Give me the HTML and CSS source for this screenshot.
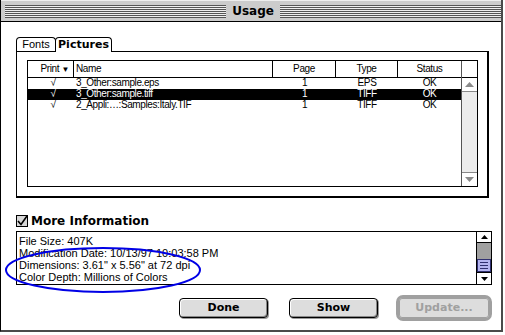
FILE: index.html
```html
<!DOCTYPE html>
<html>
<head>
<meta charset="utf-8">
<link rel="stylesheet" href="styles.css">
</head>
<body>
<div class="window">
  <div class="titlebar">
    <span class="stripes"></span>
    <span class="title">Usage</span>
    <span class="stripes"></span>
  </div>
  <div class="content">
    <div class="tabs">
      <div class="tab">Fonts</div>
      <div class="tab active">Pictures</div>
    </div>
    <div class="panel">
      <div class="list">
        <div class="list-main">
          <div class="row head">
            <div class="c c-print">Print <span class="tri">▼</span></div>
            <div class="c c-name">Name</div>
            <div class="c c-mid">Page</div>
            <div class="c c-mid">Type</div>
            <div class="c c-mid last">Status</div>
          </div>
          <div class="row">
            <div class="c c-chk">√</div>
            <div class="c c-name">3_Other:sample.eps</div>
            <div class="c c-mid">1</div>
            <div class="c c-mid">EPS</div>
            <div class="c c-mid">OK</div>
          </div>
          <div class="row sel">
            <div class="c c-chk">√</div>
            <div class="c c-name">3_Other:sample.tiff</div>
            <div class="c c-mid">1</div>
            <div class="c c-mid">TIFF</div>
            <div class="c c-mid">OK</div>
          </div>
          <div class="row">
            <div class="c c-chk">√</div>
            <div class="c c-name">2_Appli:…:Samples:Italy.TIF</div>
            <div class="c c-mid">1</div>
            <div class="c c-mid">TIFF</div>
            <div class="c c-mid">OK</div>
          </div>
        </div>
        <div class="vscroll">
          <div class="vs-head"></div>
          <div class="vs-up"><svg width="9" height="5" viewBox="0 0 9 5"><path d="M0 5 L4.5 0 L9 5 Z" fill="#8a8a8a"/></svg></div>
          <div class="vs-track"></div>
          <div class="vs-down"><svg width="9" height="5" viewBox="0 0 9 5"><path d="M0 0 L4.5 5 L9 0 Z" fill="#8a8a8a"/></svg></div>
        </div>
      </div>
    </div>
    <div class="more">
      <svg class="checkbox" width="12" height="12" viewBox="0 0 12 12">
        <rect x="0.5" y="0.5" width="11" height="11" fill="#d8d8d8" stroke="#000"/>
        <path d="M2 6 L5 9.5 L11 1" fill="none" stroke="#000" stroke-width="1.6"/>
      </svg>
      <span>More Information</span>
    </div>
    <div class="info">
      <div class="info-text">
        <div>File Size: 407K</div>
        <div>Modification Date: 10/13/97 10:03:58 PM</div>
        <div>Dimensions: 3.61" x 5.56" at 72 dpi</div>
        <div>Color Depth: Millions of Colors</div>
      </div>
      <div class="iscroll">
        <div class="is-up"><svg width="7" height="4" viewBox="0 0 7 4"><path d="M0 4 L3.5 0 L7 4 Z" fill="#000"/></svg></div>
        <div class="is-track"></div>
        <div class="is-thumb"><span></span><span></span><span></span></div>
        <div class="is-down"><svg width="7" height="4" viewBox="0 0 7 4"><path d="M0 0 L3.5 4 L7 0 Z" fill="#000"/></svg></div>
      </div>
    </div>
    <div class="buttons">
      <div class="btn done">Done</div>
      <div class="btn show">Show</div>
      <div class="ring"><div class="btn disabled">Update...</div></div>
    </div>
  </div>
  <svg class="annot" width="505" height="335" viewBox="0 0 505 335">
    <ellipse cx="103" cy="270" rx="97" ry="22" fill="none" stroke="#0000e6" stroke-width="2"/>
  </svg>
</div>
</body>
</html>
```
FILE: styles.css
```css
* { box-sizing: border-box; }
body {
  margin: 0;
  background: #fff;
  font-family: "Liberation Sans", Arial, sans-serif;
  color: #000;
}
.window {
  position: relative;
  width: 503px;
  height: 332px;
  border-left: 1px solid #000;
  border-right: 2px solid #4a4a4a;
  border-bottom: 2px solid #4a4a4a;
  background: #fff;
  display: flex;
  flex-direction: column;
}
.titlebar {
  height: 22px;
  flex: none;
  background: #cccccc;
  border-top: 1px solid #eee;
  border-bottom: 1px solid #000;
  display: flex;
  align-items: center;
  padding: 0 0 0 4px;
}
.stripes {
  flex: 1;
  height: 13px;
  background: repeating-linear-gradient(to bottom, #555 0 1px, #eeeeee 1px 2px);
}
.title {
  padding: 0 6px;
  font: bold 12px "DejaVu Sans", sans-serif;
  line-height: 14px;
}
.content {
  flex: 1;
  display: flex;
  flex-direction: column;
  padding: 15px 9px 0 15px;
}
.tabs {
  display: flex;
  align-items: flex-end;
  height: 14px;
}
.tab {
  height: 14px;
  border: 1px solid #000;
  border-bottom: none;
  border-radius: 4px 4px 0 0;
  font-size: 11px;
  line-height: 13px;
  text-align: center;
  width: 40px;
  background: #fff;
}
.tab.active {
  position: relative;
  z-index: 1;
  width: 57px;
  height: 15px;
  margin-left: -1px;
  margin-bottom: -1px;
  font: bold 11px "DejaVu Sans", sans-serif;
  line-height: 13px;
}
.panel {
  width: 473px;
  height: 147px;
  border: 1px solid #000;
  border-right-width: 2px;
  border-bottom-width: 2px;
  padding: 8px 9px 9px 10px;
}
.list {
  display: flex;
  width: 451px;
  height: 127px;
  border: 1px solid #000;
}
.list-main { width: 433px; }
.row {
  display: grid;
  grid-template-columns: 46px 199px 63px 62px 63px;
  height: 11px;
  font-size: 10px;
  line-height: 10px;
  letter-spacing: -0.4px;
  white-space: nowrap;
}
.row.head {
  height: 17px;
  line-height: 16px;
  border-bottom: 1px solid #000;
}
.row.head .c { border-right: 1px solid #000; }
.row.head .c.last { border-right: none; }
.row.sel { background: #000; color: #fff; }
.c-print { text-align: right; padding-right: 4px; }
.tri { font-size: 8px; }
.c-chk { text-align: center; padding-left: 4px; }
.c-name { padding-left: 2px; }
.c-mid { text-align: center; }
.vscroll {
  width: 16px;
  border-left: 1px solid #555;
  display: flex;
  flex-direction: column;
}
.vs-head { height: 17px; border-bottom: 1px solid #000; }
.vs-up, .vs-down {
  height: 14px;
  display: flex;
  align-items: center;
  justify-content: center;
}
.vs-up { border-bottom: 1px solid #888; }
.vs-down { border-top: 1px solid #888; }
.vs-track { flex: 1; background: #ececec; }
.more {
  display: flex;
  align-items: center;
  gap: 3px;
  height: 14px;
  margin-top: 16px;
  font: bold 12px "DejaVu Sans", sans-serif;
}
.checkbox { flex: none; }
.info {
  display: flex;
  height: 54px;
  margin-top: 3px;
  border: 1px solid #000;
}
.info-text {
  flex: 1;
  padding: 3px 0 0 2px;
  font-size: 11px;
  line-height: 12px;
  white-space: nowrap;
}
.iscroll {
  width: 15px;
  border-left: 1px solid #000;
  display: flex;
  flex-direction: column;
}
.is-up, .is-down {
  display: flex;
  align-items: center;
  justify-content: center;
  background: #fff;
}
.is-up { height: 11px; border-bottom: 1px solid #000; }
.is-down { height: 12px; border-top: 1px solid #000; }
.is-track { height: 16px; background: #a0a0a0; }
.is-thumb {
  height: 13px;
  background: #b4b4f0;
  border: 1px solid #303070;
  display: flex;
  flex-direction: column;
  justify-content: center;
  gap: 2px;
  padding: 0 2px;
}
.is-thumb span { height: 1px; background: #303070; }
.buttons {
  display: flex;
  justify-content: flex-end;
  align-items: center;
  margin-top: 10px;
}
.btn {
  width: 89px;
  height: 20px;
  border: 1px solid #000;
  border-radius: 4px;
  background: #dddddd;
  box-shadow: inset 1px 1px 0 #fff, inset -1px -1px 0 #888, 1px 1px 0 #999;
  font: bold 11px "DejaVu Sans", sans-serif;
  line-height: 18px;
  text-align: center;
}
.done { margin-right: 21px; }
.show { margin-right: 18px; }
.ring {
  width: 96px;
  height: 26px;
  border: 3px solid #a0a0a0;
  border-radius: 7px;
  background: #dddddd;
}
.btn.disabled {
  width: 90px;
  border-color: #a0a0a0;
  color: #a0a0a0;
  box-shadow: none;
  border-radius: 3px;
}
.annot {
  position: absolute;
  left: -1px;
  top: 0;
  pointer-events: none;
  overflow: visible;
}
```
